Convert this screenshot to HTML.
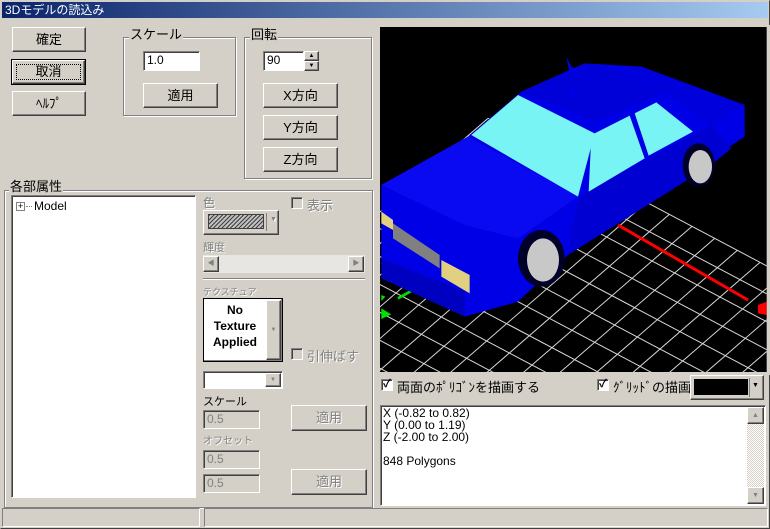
<!DOCTYPE html>
<html><head><meta charset="utf-8"><style>
*{box-sizing:border-box}
body{margin:0;width:770px;height:529px;background:#d4d0c8;font-family:"Liberation Sans","Noto Sans CJK JP",sans-serif;font-size:12px;position:relative;overflow:hidden;color:#000}
.a{position:absolute}
.win{left:0;top:0;width:770px;height:529px;border:1px solid;border-color:#d4d0c8 #404040 #404040 #d4d0c8}
.title{left:2px;top:2px;width:766px;height:16px;background:linear-gradient(90deg,#0a246a,#a6caf0);color:#fff;font-size:12px;line-height:16px;padding-left:3px}
.btn{background:#d4d0c8;border:1px solid;border-color:#fff #404040 #404040 #fff;box-shadow:inset -1px -1px #808080;text-align:center;font-size:13px}
.dis{color:#808080;text-shadow:1px 1px #fff}
.grp{border:1px solid #808080;box-shadow:1px 1px #fff,inset 1px 1px #fff}
.lg{background:#d4d0c8;padding:0 1px;font-size:13px;line-height:13px}
.ed{background:#fff;border:1px solid;border-color:#808080 #fff #fff #808080;box-shadow:inset 1px 1px #404040;padding:2px 3px;font-size:12px;line-height:13px}
.ed.d{background:#d4d0c8;color:#808080}
.cb{width:12px;height:12px;background:#fff;border:1px solid;border-color:#808080 #fff #fff #808080;box-shadow:inset 1px 1px #404040}
.cb.d{background:#d4d0c8}
.sb{background:#d4d0c8;border:1px solid;border-color:#fff #404040 #404040 #fff;box-shadow:inset -1px -1px #808080}
</style></head><body>
<div class="a win"></div>
<div class="a title">3Dモデルの読込み</div>

<div class="a btn" style="left:12px;top:27px;width:74px;height:25px;line-height:23px">確定</div>
<div class="a" style="left:11px;top:59px;width:75px;height:26px;border:1px solid #000"></div>
<div class="a btn" style="left:12px;top:60px;width:73px;height:24px;line-height:22px">取消</div>
<div class="a" style="left:16px;top:64px;width:65px;height:16px;border:1px dotted #000"></div>
<div class="a btn" style="left:12px;top:91px;width:74px;height:25px;line-height:23px">ﾍﾙﾌﾟ</div>

<div class="a grp" style="left:123px;top:37px;width:113px;height:79px"></div>
<div class="a lg" style="left:129px;top:28px">スケール</div>
<div class="a ed" style="left:143px;top:51px;width:57px;height:20px">1.0</div>
<div class="a btn" style="left:143px;top:83px;width:75px;height:25px;line-height:23px">適用</div>

<div class="a grp" style="left:244px;top:37px;width:128px;height:142px"></div>
<div class="a lg" style="left:250px;top:28px">回転</div>
<div class="a ed" style="left:263px;top:51px;width:41px;height:20px">90</div>
<div class="a sb" style="left:304px;top:51px;width:15px;height:10px;font-size:6px;line-height:8px;text-align:center">▲</div>
<div class="a sb" style="left:304px;top:61px;width:15px;height:10px;font-size:6px;line-height:8px;text-align:center">▼</div>
<div class="a btn" style="left:263px;top:83px;width:75px;height:25px;line-height:23px">X方向</div>
<div class="a btn" style="left:263px;top:115px;width:75px;height:25px;line-height:23px">Y方向</div>
<div class="a btn" style="left:263px;top:147px;width:75px;height:25px;line-height:23px">Z方向</div>

<div class="a grp" style="left:4px;top:190px;width:369px;height:318px"></div>
<div class="a lg" style="left:9px;top:180px">各部属性</div>
<div class="a ed" style="left:11px;top:195px;width:185px;height:303px;padding:0"></div>
<div class="a" style="left:16px;top:202px;width:9px;height:9px;border:1px solid #808080;background:#fff;font-size:9px;line-height:7px;text-align:center">+</div>
<div class="a" style="left:26px;top:206px;width:6px;border-top:1px dotted #808080"></div>
<div class="a" style="left:34px;top:199px;font-size:12px">Model</div>

<div class="a dis" style="left:203px;top:194px;font-size:12px">色</div>
<div class="a cb d" style="left:291px;top:197px"></div>
<div class="a dis" style="left:307px;top:195px;font-size:13px">表示</div>
<div class="a btn" style="left:203px;top:210px;width:76px;height:25px"></div>
<div class="a" style="left:208px;top:214px;width:56px;height:15px;border:1px solid #404040;background:repeating-linear-gradient(135deg,#404040 0 1px,#c0c0c0 1px 3px)"></div>
<div class="a" style="left:266px;top:213px;width:1px;height:18px;background:#808080"></div>
<div class="a dis" style="left:270px;top:216px;font-size:7px">▼</div>
<div class="a dis" style="left:203px;top:239px;font-size:11px">輝度</div>
<div class="a" style="left:203px;top:255px;width:162px;height:18px;background:#e8e6e2"></div>
<div class="a sb" style="left:203px;top:256px;width:16px;height:16px;font-size:7px;line-height:14px;text-align:center;color:#808080">◀</div>
<div class="a sb" style="left:348px;top:256px;width:16px;height:16px;font-size:7px;line-height:14px;text-align:center;color:#808080">▶</div>
<div class="a" style="left:203px;top:278px;width:162px;height:2px;border-top:1px solid #808080;border-bottom:1px solid #fff"></div>
<div class="a dis" style="left:203px;top:285px;font-size:9px">テクスチュア</div>
<div class="a" style="left:203px;top:298px;width:80px;height:64px;background:#fff;border:1px solid #000;box-shadow:inset -1px -1px #808080"></div>
<div class="a" style="left:205px;top:302px;width:60px;text-align:center;font-weight:bold;font-size:12px;line-height:16px">No<br>Texture<br>Applied</div>
<div class="a sb" style="left:266px;top:300px;width:15px;height:60px;font-size:6px;line-height:58px;text-align:center;color:#808080">▼</div>
<div class="a cb d" style="left:291px;top:348px"></div>
<div class="a dis" style="left:307px;top:346px;font-size:13px">引伸ばす</div>
<div class="a ed" style="left:203px;top:371px;width:80px;height:18px"></div>
<div class="a sb" style="left:265px;top:373px;width:16px;height:14px;font-size:6px;line-height:12px;text-align:center;color:#808080">▼</div>
<div class="a" style="left:203px;top:393px;font-size:11px">スケール</div>
<div class="a ed d" style="left:203px;top:410px;width:57px;height:19px">0.5</div>
<div class="a btn dis" style="left:291px;top:405px;width:76px;height:26px;line-height:24px">適用</div>
<div class="a dis" style="left:203px;top:432px;font-size:10px">オフセット</div>
<div class="a ed d" style="left:203px;top:450px;width:57px;height:19px">0.5</div>
<div class="a ed d" style="left:203px;top:474px;width:57px;height:19px">0.5</div>
<div class="a btn dis" style="left:291px;top:469px;width:76px;height:26px;line-height:24px">適用</div>

<div class="a" style="left:2px;top:508px;width:198px;height:19px;border:1px solid;border-color:#808080 #fff #fff #808080"></div>
<div class="a" style="left:204px;top:508px;width:564px;height:19px;border:1px solid;border-color:#808080 #fff #fff #808080"></div>

<svg class="a" style="left:378px;top:25px" width="392" height="350" viewBox="0 0 1176 1050">
<rect x="0" y="0" width="1176" height="1050" fill="#d4d0c8"/>
<rect x="6" y="6" width="1160" height="1035" fill="#000"/>
<defs><clipPath id="c"><rect x="6" y="6" width="1160" height="1035"/></clipPath></defs>
<g clip-path="url(#c)" stroke="#d8d8d8" stroke-width="1">
<g transform="matrix(68,36,-60,52,330,280)">
<path vector-effect="non-scaling-stroke" d="M0 0H16M0 1H16M0 2H16M0 3H16M0 4H16M0 5H16M0 6H16M0 7H16M0 8H16M0 9H16M0 10H16M0 11H16M0 12H16M0 13H16M0 14H16M0 0V14M1 0V14M2 0V14M3 0V14M4 0V14M5 0V14M6 0V14M7 0V14M8 0V14M9 0V14M10 0V14M11 0V14M12 0V14M13 0V14M14 0V14M15 0V14M16 0V14"/>
</g>
<line x1="720" y1="600" x2="1110" y2="825" stroke="#ff0000" stroke-width="9"/>
<polygon points="1140,840 1166,830 1166,870 1140,865" fill="#ff0000" stroke="none"/>
<line x1="60" y1="820" x2="150" y2="770" stroke="#00e000" stroke-width="8"/>
<polygon points="10,850 40,868 10,882" fill="#00e000" stroke="none"/>
<polygon points="10,810 22,815 10,828" fill="#00e000" stroke="none"/>
</g>
<g clip-path="url(#c)">
<polygon points="10,480 270,335 430,200 620,115 790,125 1100,240 1100,335 1000,400 570,690 420,830 260,875 10,700" fill="#0000e6"/>
<polygon points="10,480 270,335 600,515 420,640 260,600" fill="#0a0af2"/>
<polygon points="600,515 1000,300 1060,370 1000,420 570,690" fill="#0000d2"/>
<polygon points="430,200 620,115 720,140 860,200 650,290" fill="#0000d8"/>
<polygon points="720,140 790,125 1100,240 1000,300 860,200" fill="#0000dc"/>
<polygon points="280,330 420,210 650,325 600,515" fill="#78f4f4"/>
<polygon points="640,330 755,272 800,400 632,500" fill="#78f4f4"/>
<polygon points="770,265 835,232 945,320 812,392" fill="#78f4f4"/>
<polygon points="10,700 260,800 260,875 10,760" fill="#0000c0"/>
<ellipse cx="490" cy="700" rx="70" ry="85" fill="#000028"/>
<ellipse cx="495" cy="705" rx="48" ry="65" fill="#c8c8c8"/>
<ellipse cx="962" cy="420" rx="48" ry="65" fill="#000028"/>
<ellipse cx="967" cy="425" rx="35" ry="50" fill="#c8c8c8"/>
<polygon points="45,595 185,690 185,730 45,640" fill="#808080"/>
<polygon points="10,560 45,585 45,615 10,595" fill="#e0d080"/>
<polygon points="190,705 275,750 275,805 190,755" fill="#e0d080"/>
<polygon points="565,95 580,125 610,140 575,145" fill="#0000e6"/>
<rect x="580" y="185" width="6" height="30" fill="#0000f0"/>
</g>
</svg>

<div class="a cb" style="left:381px;top:379px;font-size:11px;line-height:9px;font-weight:bold;text-align:center">✓</div>
<div class="a" style="left:397px;top:377px;font-size:13px">両面のﾎﾟﾘｺﾞﾝを描画する</div>
<div class="a cb" style="left:597px;top:379px;font-size:11px;line-height:9px;font-weight:bold;text-align:center">✓</div>
<div class="a" style="left:613px;top:377px;font-size:13px">ｸﾞﾘｯﾄﾞの描画</div>
<div class="a btn" style="left:690px;top:375px;width:74px;height:25px"></div>
<div class="a" style="left:694px;top:379px;width:54px;height:16px;background:#000"></div>
<div class="a" style="left:749px;top:378px;width:1px;height:19px;background:#808080"></div>
<div class="a" style="left:752px;top:382px;font-size:7px">▼</div>

<div class="a ed" style="left:380px;top:405px;width:386px;height:101px;padding:1px 2px;line-height:12px;font-size:12px">X (-0.82 to 0.82)<br>Y (0.00 to 1.19)<br>Z (-2.00 to 2.00)<br><br>848 Polygons</div>
<div class="a" style="left:747px;top:407px;width:17px;height:97px;background:repeating-conic-gradient(#fff 0 25%,#d4d0c8 0 50%) 0 0/2px 2px"></div>
<div class="a sb" style="left:747px;top:407px;width:17px;height:17px;font-size:7px;line-height:15px;text-align:center;color:#808080">▲</div>
<div class="a sb" style="left:747px;top:487px;width:17px;height:17px;font-size:7px;line-height:15px;text-align:center;color:#808080">▼</div>
</body></html>
